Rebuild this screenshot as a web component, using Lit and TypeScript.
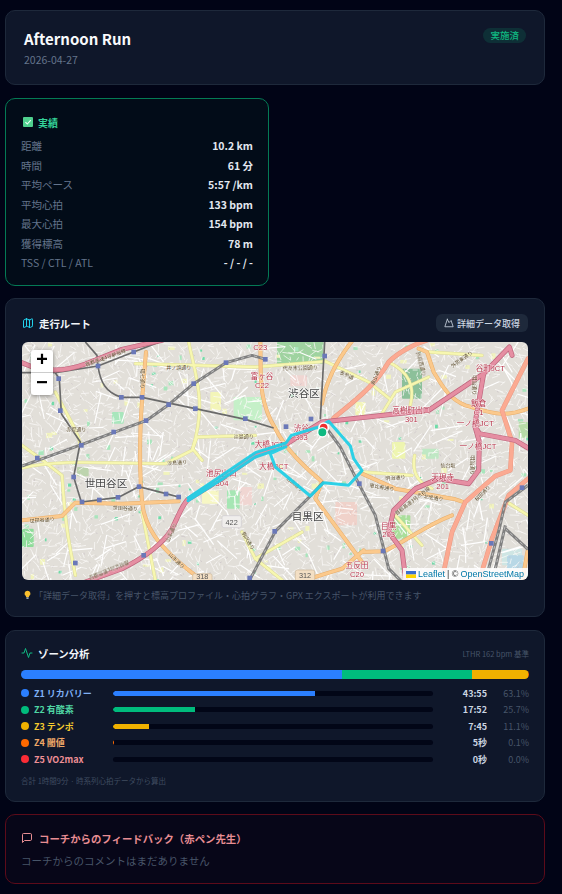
import { LitElement, html, css, svg, unsafeCSS } from "lit";
import { customElement } from "lit/decorators.js";

const FONT = unsafeCSS(`"Noto Sans CJK JP", "Noto Sans", sans-serif`);

function rng(seed: number) {
  let s = seed;
  return () => {
    s = (s * 1664525 + 1013904223) % 4294967296;
    return s / 4294967296;
  };
}

const W = 1518;
const H = 714;
const r = rng(98765);
let streets = "";
let lanes = "";
let majors = "";
const patches: { x: number; y: number; w: number; h: number; c: string }[] = [];
for (let gy = 0; gy < H; gy += 19) {
  for (let gx = 0; gx < W; gx += 19) {
    const x = gx + r() * 16;
    const y = gy + r() * 16;
    const a = r() * Math.PI;
    const l = 10 + r() * 20;
    streets += `M${x.toFixed(0)} ${y.toFixed(0)}L${(x + Math.cos(a) * l).toFixed(0)} ${(y + Math.sin(a) * l).toFixed(0)}`;
    if (r() > 0.9) {
      const b = r() * Math.PI;
      const m = 40 + r() * 60;
      majors += `M${x.toFixed(0)} ${y.toFixed(0)}L${(x + Math.cos(b) * m).toFixed(0)} ${(y + Math.sin(b) * m).toFixed(0)}`;
    }
    if (r() > 0.65) {
      lanes += `M${(x + 6).toFixed(0)} ${(y + 5).toFixed(0)}l${(r() * 14 - 7).toFixed(0)} ${(r() * 14 - 7).toFixed(0)}`;
    }
    const q = r();
    if (q > 0.975) {
      patches.push({ x, y, w: 6 + r() * 10, h: 6 + r() * 10, c: "#a8e6bc" });
    } else if (q > 0.955) {
      patches.push({ x, y, w: 8 + r() * 12, h: 6 + r() * 12, c: "#f1f3bd" });
    } else if (q > 0.94) {
      patches.push({ x, y, w: 5 + r() * 6, h: 5 + r() * 6, c: "#6fdca8" });
    }
  }
}

const parks: [number, number, number, number, string][] = [
  [765, 0, 140, 65, "#9fd3a0"],
  [805, 100, 50, 32, "#f0d6d2"],
  [565, 150, 32, 55, "#f3f5b8"],
  [635, 165, 85, 70, "#c5f0c8"],
  [645, 435, 45, 55, "#f0d6d2"],
  [615, 445, 38, 55, "#a6e6b4"],
  [540, 445, 50, 40, "#f7f7c4"],
  [940, 480, 65, 70, "#f0d2ca"],
  [1110, 520, 55, 70, "#a9df9b"],
  [1140, 80, 60, 90, "#8cc09a"],
  [1200, 320, 50, 30, "#bfe8c4"],
  [0, 560, 35, 55, "#8fdc9a"],
  [165, 375, 35, 28, "#bdd4ae"],
  [270, 210, 35, 35, "#a8e6bc"],
  [1490, 240, 28, 50, "#b7dca8"],
  [1000, 180, 30, 40, "#f3f5b8"],
  [1110, 300, 40, 50, "#eef5b0"],
  [1440, 620, 60, 50, "#cfe6e4"],
  [1455, 640, 50, 40, "#b8d8e6"],
];

const pinkRoads = [
  "M0 62 C60 90 120 92 190 66 L300 22 L420 -5",
  "M190 720 L300 680 C360 650 420 610 450 560 C470 520 480 490 498 472 L600 410 L700 340 L790 308 L900 240 L1220 205 L1385 95 L1462 15 L1470 40",
  "M1385 95 L1358 250 L1372 275 L1480 295 L1518 318",
  "M1358 250 L1372 300 L1370 385 L1340 425 L1250 410 L1180 440 L1115 505 L1100 570 L1140 625 L1152 720",
];
const salmonRoads = [
  "M935 228 C1000 175 1060 130 1100 60 C1130 30 1180 5 1215 -5",
  "M1265 690 L1290 570 L1330 480 L1420 402 L1465 385 L1470 300 L1440 205 L1518 50",
  "M1370 720 L1410 590 L1460 460 L1518 410",
];
const orangeRoads = [
  "M372 30 C362 150 345 300 360 480 C368 550 400 610 520 700",
  "M0 535 L120 522 L160 482 L300 485 L470 478",
  "M715 -5 C718 90 705 170 760 260 C800 340 880 400 900 420 L880 470 L1020 660",
  "M900 185 C912 120 940 60 992 -5",
  "M1190 20 L1215 30 L1235 90 C1260 130 1280 170 1330 190 C1400 210 1440 230 1518 200",
  "M1020 395 L1120 440 L1300 472 L1330 482",
  "M1020 630 L1085 628 C1150 600 1210 550 1290 520",
  "M850 714 L960 680 L1025 625",
  "M1500 720 L1518 620",
];
const yellowRoads = [
  "M340 65 L700 75 L910 58 L1040 120 L1105 172",
  "M500 0 C520 100 555 180 512 320 L540 355",
  "M0 378 C120 350 240 365 430 365 L510 325 L525 285 L700 280",
  "M0 310 L55 350 L120 400 C130 550 140 600 160 700",
  "M1020 390 L1170 400",
  "M1080 215 L1120 150 L1220 105",
  "M1100 60 C1160 90 1180 130 1165 190",
  "M1178 340 C1170 380 1180 420 1230 440",
  "M660 570 L700 650 L780 714",
  "M700 650 L840 570",
  "M1220 30 L1380 40",
  "M100 150 C130 210 170 270 175 310",
  "M1455 480 L1518 520",
  "M360 510 L400 714",
  "M1120 520 L1200 610",
];
const railDark = [
  "M100 92 L112 110 L118 215 L175 300 L155 405 L178 480 L290 466 L350 434 L432 455 L470 465",
  "M228 72 C235 120 250 150 298 166 L360 166 L520 200 L670 232 L755 258",
  "M100 92 L228 72 L335 30 L425 -5",
  "M190 0 L225 40 L228 72",
  "M908 0 L895 232",
  "M0 92 L100 92",
];
const railThick = [
  "M0 372 L178 308 L300 262 L372 236 L440 188 L515 125 L612 62 L690 40 L732 52",
  "M900 240 L955 315 L1010 425 L1060 520 L1100 680 L1140 720",
  "M680 720 L760 568 L865 462 L905 420",
  "M1400 680 L1432 560 L1450 480 L1518 430",
  "M1450 560 L1518 622",
  "M1420 680 L1450 550",
];
const stations = [
  [228, 72],[335, 30],[110, 110],[115, 206],[298, 166],[360, 166],[178, 310],[46, 348],[275, 270],[372, 236],[440, 188],
  [520, 200],[612, 62],[730, 52],[515, 125],[670, 230],[792, 254],[867, 231],[908, 42],[155, 405],[180, 480],[232, 474],
  [288, 466],[351, 434],[432, 456],[470, 465],[365, 640],[160, 663],[758, 568],[1012, 425],[1083, 627],[1408, 604],[1500, 437],[683, 708],
];

const redLabels: [string, number, number][] = [
  ["C23", 715, 16],["富ヶ谷", 720, 102],["C22", 720, 130],["渋谷", 838, 258],["303", 838, 286],["大橋JCT", 742, 308],
  ["大橋JCT", 755, 372],["池尻出口", 598, 394],["304", 600, 424],["高樹町出口", 1168, 205],["301", 1168, 232],["谷町JCT", 1405, 78],
  ["飯倉", 1370, 183],["C1", 1370, 210],["一ノ橋JCT", 1360, 244],["一ノ橋JCT", 1368, 314],["天現寺", 1262, 406],["201", 1262, 434],
  ["目黒", 1100, 552],["203", 1100, 578],["五反田", 1005, 669],["C20", 1005, 696],
];
const brownLabels: [string, number, number, number][] = [
  ["井ノ頭通り", 470, 72, 0],["代々木公園通り", 835, 76, -2],["赤堤通り", 163, 258, 0],["淡島通り", 665, 280, 0],["淡島通り", 465, 360, -4],
  ["世田谷通り", 310, 497, 3],["世田谷通り", 60, 532, -4],["恵比寿通り", 1080, 434, 10],["北里通り", 1235, 465, 8],["表参道", 975, 97, 25],
  ["明治通り", 1120, 405, -4],["山手通り", 445, 570, -65],["環七通り", 365, 110, 90],["目黒通り", 820, 425, 40],
  ["山手通り", 465, 655, 45],["青山通り", 1060, 100, -70],["外苑西通り", 1200, 65, 75],["明治通り", 1360, 130, 90],["明治通り", 1355, 370, 90],
  ["駒沢通り", 680, 595, 60],["首都高速3号渋谷線", 260, 682, -22],["首都高速3号渋谷線", 1170, 475, -38],["首都高速4号新宿線", 250, 45, -20],
  ["桜田通り", 1380, 452, -45],["外苑東通り", 1318, 50, -35],["仙台坂", 1278, 367, 0],
];

function mapSvg() {
  const road = (list: string[], casing: string, fill: string, cw: number, fw: number) => svg`
    ${list.map((d) => svg`<path d=${d} fill="none" stroke=${casing} stroke-width=${cw} stroke-linejoin="round" stroke-linecap="round"></path>`)}
    ${list.map((d) => svg`<path d=${d} fill="none" stroke=${fill} stroke-width=${fw} stroke-linejoin="round" stroke-linecap="round"></path>`)}
  `;
  return svg`<svg class="map-svg" viewBox="0 0 ${W} ${H}" width="506" height="238" preserveAspectRatio="none">
    <rect width=${W} height=${H} fill="#e2dfd9"></rect>
    ${parks.map(([x, y, w, h, c]) => svg`<rect x=${x} y=${y} width=${w} height=${h} fill=${c} rx="3"></rect>`)}
    ${patches.map((p) => svg`<rect x=${p.x} y=${p.y} width=${p.w} height=${p.h} fill=${p.c}></rect>`)}
    <path d=${lanes} stroke="#c2bac0" stroke-width="1.6" fill="none"></path>
    <path d=${streets} stroke="#fbfaf8" stroke-width="2.2" fill="none"></path>
    <path d=${majors} stroke="#fff" stroke-width="3.5" fill="none"></path>
    ${road(yellowRoads, "#dcdb98", "#f7f7b0", 10, 7)}
    ${road(orangeRoads, "#e6ad6c", "#fbc98c", 12, 9)}
    ${road(salmonRoads, "#ea9a84", "#fbaa92", 14, 11)}
    ${railDark.map((d) => svg`<path d=${d} fill="none" stroke="#6a6a6a" stroke-width="5" stroke-linejoin="round"></path>`)}
    ${railThick.map((d) => svg`<path d=${d} fill="none" stroke="#808080" stroke-width="9" stroke-linejoin="round"></path>
      <path d=${d} fill="none" stroke="#dedede" stroke-width="2" stroke-dasharray="10 10"></path>`)}
    ${road(pinkRoads, "#bd647c", "#e58ea2", 15, 11)}
    ${stations.map(([x, y]) => svg`<rect x=${x - 7} y=${y - 7} width="14" height="14" fill="#6a78b8"></rect>`)}
    <g class="lbl-brown">
      ${brownLabels.map(([t, x, y, a]) => svg`<text x=${x} y=${y} transform="rotate(${a} ${x} ${y})" text-anchor="middle" dominant-baseline="central">${t}</text>`)}
    </g>
    <g class="lbl-red">
      ${redLabels.map(([t, x, y]) => svg`<text x=${x} y=${y} text-anchor="middle" dominant-baseline="central">${t}</text>`)}
    </g>
    <g class="lbl-area">
      <text x="846" y="152" text-anchor="middle" dominant-baseline="central">渋谷区</text>
      <text x="252" y="422" text-anchor="middle" dominant-baseline="central">世田谷区</text>
      <text x="857" y="520" text-anchor="middle" dominant-baseline="central">目黒区</text>
    </g>
    <g class="shield">
      <rect x="600" y="521" width="58" height="36" rx="6" fill="#f0eeec" stroke="#cfcbd0" stroke-width="2"></rect>
      <text x="629" y="540" text-anchor="middle" dominant-baseline="central">422</text>
      <rect x="512" y="695" width="58" height="36" rx="6" fill="#f3dfc4" stroke="#cdb99c" stroke-width="2"></rect>
      <text x="541" y="702" text-anchor="middle" dominant-baseline="central">318</text>
      <rect x="820" y="684" width="58" height="36" rx="6" fill="#f3dfc4" stroke="#cdb99c" stroke-width="2"></rect>
      <text x="849" y="700" text-anchor="middle" dominant-baseline="central">312</text>
    </g>
    <path d="M498 468 L600 400 L700 332 L792 303 L808 280 L890 255 L920 238 L985 312 L995 350 L1020 386 L980 430 L905 422 L865 462 L760 375 L745 335 L792 314 L700 345 L600 412 L498 476"
      fill="none" stroke="#22cfe6" stroke-width="9" stroke-linejoin="round" stroke-linecap="round" stroke-opacity="0.95"></path>
    <circle cx="905" cy="257" r="14" fill="#ef2f2f" stroke="#fff" stroke-width="5"></circle>
    <circle cx="901" cy="271" r="14" fill="#10b981" stroke="#fff" stroke-width="4"></circle>
  </svg>`;
}

@customElement("app-root")
export class AppRoot extends LitElement {
  static styles = css`
    :host {
      display: block;
      width: 562px;
      height: 894px;
      overflow: hidden;
      background: #010416;
      font-family: ${FONT};
      color: #e2e8f0;
    }
    .page {
      display: flex;
      flex-direction: column;
      gap: 12px;
      padding: 10px 17px 0 5px;
    }
    .card {
      box-sizing: border-box;
      background: #0f172a;
      border: 1px solid #1e293b;
      border-radius: 10px;
    }
    .mt { margin-top: 1px; }

    .head {
      height: 75px;
      padding: 17px 18px 0;
      display: flex;
      justify-content: space-between;
      align-items: flex-start;
    }
    .head h1 { margin: 0; font-size: 15px; line-height: 22px; font-weight: 700; color: #f8fafc; }
    .head .date { margin-top: 2px; font-size: 10.5px; line-height: 16px; color: #64748b; }
    .badge {
      height: 15px;
      padding: 0 7px;
      border-radius: 8px;
      background: rgba(16, 185, 129, 0.15);
      color: #10b981;
      font-size: 9.5px;
      line-height: 15px;
      font-weight: 500;
    }

    .grid { display: grid; grid-template-columns: 264px 264px; gap: 12px; }
    .result {
      height: 188px;
      padding: 16px 15px 0;
      background: #020c18;
      border: 1px solid #047a55;
      border-radius: 10px;
      box-sizing: border-box;
    }
    .result-title {
      display: flex;
      align-items: center;
      gap: 5px;
      height: 14px;
      margin-bottom: 7px;
      padding-left: 2px;
      font-size: 10px;
      font-weight: 700;
      color: #34d399;
    }
    .row {
      display: flex;
      justify-content: space-between;
      height: 19.5px;
      line-height: 19.5px;
      font-size: 10.5px;
      color: #64748b;
    }
    .row b { color: #e2e8f0; font-weight: 700; }

    .route { height: 319px; padding: 15px 16px 0; }
    .sec-head {
      display: flex;
      justify-content: space-between;
      align-items: center;
      height: 18px;
      margin-bottom: 10px;
    }
    .sec-title {
      display: flex;
      align-items: center;
      gap: 5px;
      font-size: 10.4px;
      font-weight: 700;
      color: #f1f5f9;
    }
    .btn {
      display: flex;
      align-items: center;
      gap: 3px;
      height: 18px;
      padding: 0 8px;
      border-radius: 6px;
      background: #1e293b;
      color: #cbd5e1;
      font-size: 9px;
      font-weight: 500;
    }
    .map {
      position: relative;
      width: 506px;
      height: 238px;
      border-radius: 6px;
      overflow: hidden;
    }
    .map-svg { display: block; filter: blur(0.45px); }
    .lbl-brown text { font-size: 15px; fill: #5a4a2a; font-family: ${FONT}; stroke: rgba(255,255,255,.5); stroke-width: 2px; paint-order: stroke; }
    .lbl-red text { font-size: 23px; fill: #b8384e; font-family: "Liberation Sans", ${FONT}; stroke: rgba(255,255,255,.7); stroke-width: 3px; paint-order: stroke; }
    .lbl-area text { font-size: 32px; fill: #444; font-family: ${FONT}; stroke: rgba(255,255,255,.8); stroke-width: 4px; paint-order: stroke; }
    .shield text { font-size: 22px; fill: #555; font-family: "Liberation Sans", sans-serif; }
    .zoom {
      position: absolute;
      left: 9px;
      top: 8px;
      width: 22px;
      height: 45px;
      background: #fff;
      border-radius: 3px;
      box-shadow: 0 1px 4px rgba(0, 0, 0, 0.4);
      display: flex;
      flex-direction: column;
      font-family: "Liberation Mono", monospace;
      font-weight: 700;
      font-size: 20px;
      color: #000;
    }
    .zoom span {
      flex: 1;
      display: flex;
      align-items: center;
      justify-content: center;
      line-height: 1;
    }
    .zoom span + span { border-top: 1px solid #ccc; }
    .attr {
      position: absolute;
      right: 0;
      bottom: 0;
      height: 12px;
      padding: 0 4px 0 3px;
      display: flex;
      align-items: center;
      gap: 2px;
      background: rgba(255, 255, 255, 0.85);
      font-family: "Liberation Sans", sans-serif;
      font-size: 9px;
      color: #333;
    }
    .attr a { color: #0078a8; text-decoration: none; }
    .hint {
      display: flex;
      align-items: center;
      gap: 3px;
      height: 14px;
      margin-top: 8px;
      padding-left: 2px;
      font-size: 9px;
      color: #475569;
    }

    .zone { height: 172px; padding: 15px 15px 0; }
    .zone .sec-head { height: 14px; margin-bottom: 10px; }
    .zone .lthr { font-size: 7.5px; color: #475569; }
    .stack { display: flex; height: 9px; border-radius: 5px; overflow: hidden; margin-bottom: 6px; }
    .stack i { display: block; height: 100%; }
    .zrow {
      display: grid;
      grid-template-columns: 8px 84px 320px 54px 42px;
      align-items: center;
      height: 16.5px;
      font-size: 9px;
    }
    .dot { width: 8px; height: 8px; border-radius: 50%; }
    .zname { padding-left: 5px; font-weight: 700; white-space: nowrap; }
    .track { height: 5px; border-radius: 3px; background: #020617; overflow: hidden; }
    .track i { display: block; height: 100%; border-radius: 3px 0 0 3px; }
    .ztime { text-align: right; font-weight: 700; color: #cbd5e1; }
    .zpct { text-align: right; color: #475569; }
    .zfoot { margin-top: 7.5px; height: 12px; line-height: 12px; font-size: 7.5px; color: #3f4c60; }

    .fb {
      height: 70px;
      padding: 15px 15px 0;
      box-sizing: border-box;
      background: #070618;
      border: 1px solid #5c0b1a;
      border-radius: 10px;
    }
    .fb-title {
      display: flex;
      align-items: center;
      gap: 6px;
      height: 16px;
      font-size: 10.4px;
      font-weight: 700;
      color: #e78d93;
    }
    .fb-text { margin-top: 7px; font-size: 10.5px; line-height: 16px; color: #475569; }
  `;

  render() {
    const rows = [
      ["距離", "10.2 km"],
      ["時間", "61 分"],
      ["平均ペース", "5:57 /km"],
      ["平均心拍", "133 bpm"],
      ["最大心拍", "154 bpm"],
      ["獲得標高", "78 m"],
      ["TSS / CTL / ATL", "- / - / -"],
    ];
    const zones = [
      { n: "Z1 リカバリー", c: "#2b7fff", t: "#7fb0f5", w: 63.1, time: "43:55", pct: "63.1%" },
      { n: "Z2 有酸素", c: "#00bc7d", t: "#4fd6a4", w: 25.7, time: "17:52", pct: "25.7%" },
      { n: "Z3 テンポ", c: "#f0b100", t: "#f5cb2e", w: 11.1, time: "7:45", pct: "11.1%" },
      { n: "Z4 閾値", c: "#ff6900", t: "#f0a868", w: 0.1, time: "5秒", pct: "0.1%" },
      { n: "Z5 VO2max", c: "#fb2c36", t: "#ee8f96", w: 0, time: "0秒", pct: "0.0%" },
    ];
    return html`
      <div class="page">
        <div class="card head">
          <div>
            <h1>Afternoon Run</h1>
            <div class="date">2026-04-27</div>
          </div>
          <div class="badge">実施済</div>
        </div>

        <div class="grid mt">
          <div class="result">
            <div class="result-title">
              <svg width="10" height="10" viewBox="0 0 10 10">
                <rect width="10" height="10" rx="1" fill="#4fd08e"></rect>
                <path d="M2.4 5.2 L4.3 7 L7.8 3.2" fill="none" stroke="#eafff4" stroke-width="1.1"></path>
              </svg>
              実績
            </div>
            ${rows.map(([k, v]) => html`<div class="row"><span>${k}</span><b>${v}</b></div>`)}
          </div>
        </div>

        <div class="card route">
          <div class="sec-head">
            <div class="sec-title">
              <svg width="12" height="12" viewBox="0 0 24 24" fill="none" stroke="#22d3ee" stroke-width="2" stroke-linecap="round" stroke-linejoin="round">
                <path d="M14.1 5.9 9.9 3.8a2 2 0 0 0-1.8 0L3.6 6.1A1 1 0 0 0 3 7v13a1 1 0 0 0 1.4.9l4.5-2.2a2 2 0 0 1 1.8 0l4.2 2.1a2 2 0 0 0 1.8 0l4.5-2.3A1 1 0 0 0 21 17.6V4.6a1 1 0 0 0-1.4-.9l-3.7 2.2a2 2 0 0 1-1.8 0Z"></path>
                <path d="M15 6v15"></path><path d="M9 3v15"></path>
              </svg>
              走行ルート
            </div>
            <div class="btn">
              <svg width="10" height="10" viewBox="0 0 24 24" fill="none" stroke="#cbd5e1" stroke-width="2" stroke-linecap="round" stroke-linejoin="round">
                <path d="m8 3 4 8 5-5 5 15H2L8 3z"></path>
              </svg>
              詳細データ取得
            </div>
          </div>
          <div class="map">
            ${mapSvg()}
            <div class="zoom"><span>+</span><span>−</span></div>
            <div class="attr">
              <svg width="10" height="7" viewBox="0 0 10 7">
                <rect width="10" height="3.5" fill="#3a6fd0"></rect>
                <rect y="3.5" width="10" height="3.5" fill="#ffd500"></rect>
              </svg>
              <a>Leaflet</a> | © <a>OpenStreetMap</a>
            </div>
          </div>
          <div class="hint">
            <svg width="7" height="10" viewBox="0 0 9 12">
              <path d="M4.5 0.5 a3.8 3.8 0 0 1 2.2 6.9 L6.2 8.8 H2.8 L2.3 7.4 A3.8 3.8 0 0 1 4.5 0.5Z" fill="#fbc02d"></path>
              <rect x="3" y="9" width="3" height="2.2" rx=".6" fill="#94a3b8"></rect>
            </svg>
            「詳細データ取得」を押すと標高プロファイル・心拍グラフ・GPX エクスポートが利用できます
          </div>
        </div>

        <div class="card zone mt">
          <div class="sec-head">
            <div class="sec-title">
              <svg width="12" height="12" viewBox="0 0 24 24" fill="none" stroke="#10b981" stroke-width="2" stroke-linecap="round" stroke-linejoin="round">
                <path d="M22 12h-4l-3 9L9 3l-3 9H2"></path>
              </svg>
              ゾーン分析
            </div>
            <div class="lthr">LTHR 162 bpm 基準</div>
          </div>
          <div class="stack">
            ${zones.map((z) => html`<i style="width:${z.w}%;background:${z.c}"></i>`)}
          </div>
          ${zones.map(
            (z) => html`<div class="zrow">
              <span class="dot" style="background:${z.c}"></span>
              <span class="zname" style="color:${z.t}">${z.n}</span>
              <span class="track"><i style="width:${z.w}%;background:${z.c}"></i></span>
              <span class="ztime">${z.time}</span>
              <span class="zpct">${z.pct}</span>
            </div>`
          )}
          <div class="zfoot">合計 1時間9分 · 時系列心拍データから算出</div>
        </div>

        <div class="fb">
          <div class="fb-title">
            <svg width="12" height="12" viewBox="0 0 24 24" fill="none" stroke="#e78d93" stroke-width="2" stroke-linecap="round" stroke-linejoin="round">
              <path d="M21 15a2 2 0 0 1-2 2H7l-4 4V5a2 2 0 0 1 2-2h14a2 2 0 0 1 2 2z"></path>
            </svg>
            コーチからのフィードバック（赤ペン先生）
          </div>
          <div class="fb-text">コーチからのコメントはまだありません</div>
        </div>
      </div>
    `;
  }
}
